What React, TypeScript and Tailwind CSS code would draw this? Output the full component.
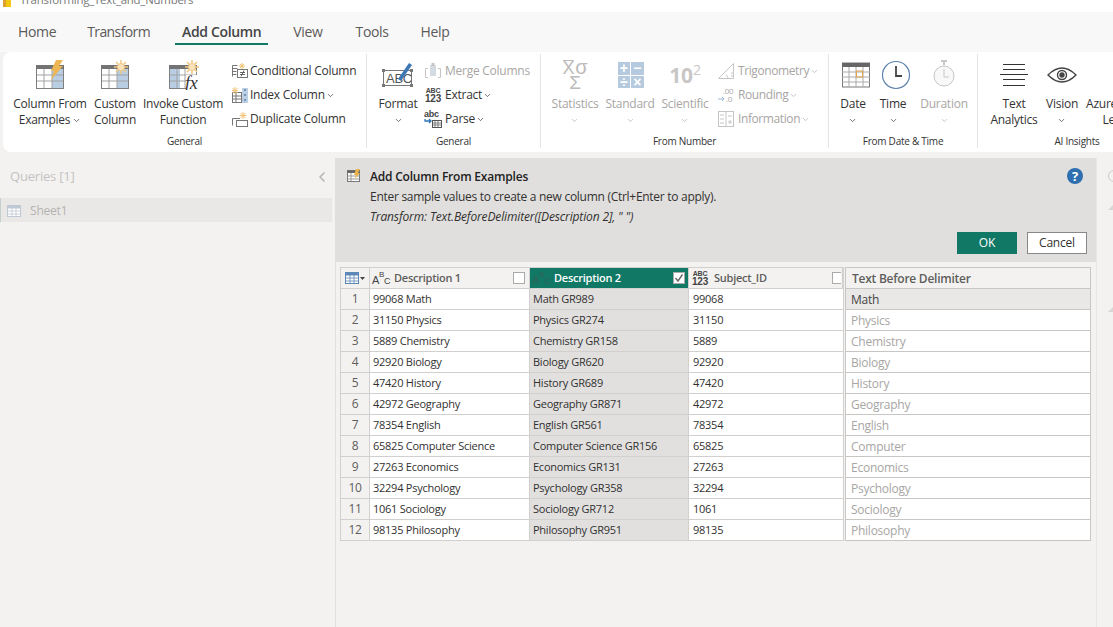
import React from 'react';
import { ChevronDown, ChevronLeft } from 'lucide-react';

const rows = [
  ['99068 Math', 'Math GR989', '99068', 'Math'],
  ['31150 Physics', 'Physics GR274', '31150', 'Physics'],
  ['5889 Chemistry', 'Chemistry GR158', '5889', 'Chemistry'],
  ['92920 Biology', 'Biology GR620', '92920', 'Biology'],
  ['47420 History', 'History GR689', '47420', 'History'],
  ['42972 Geography', 'Geography GR871', '42972', 'Geography'],
  ['78354 English', 'English GR561', '78354', 'English'],
  ['65825 Computer Science', 'Computer Science GR156', '65825', 'Computer'],
  ['27263 Economics', 'Economics GR131', '27263', 'Economics'],
  ['32294 Psychology', 'Psychology GR358', '32294', 'Psychology'],
  ['1061 Sociology', 'Sociology GR712', '1061', 'Sociology'],
  ['98135 Philosophy', 'Philosophy GR951', '98135', 'Philosophy'],
];

function Chevron({ muted }: { muted?: boolean }) {
  return <ChevronDown className={`w-[9px] h-[9px] shrink-0 ${muted ? 'text-[#b5b3b1]' : 'text-[#444]'}`} strokeWidth={2} />;
}

function Gear({ cx, cy }: { cx: number; cy: number }) {
  return (
    <g transform={`translate(${cx} ${cy})`} stroke="#f0c987" strokeWidth="1.6">
      <path d="M0-7V7M-7 0H7M-5-5L5 5M5-5L-5 5" />
      <circle r="3.5" fill="#f8e3bb" strokeWidth="1" />
    </g>
  );
}

function TableIcon({ variant }: { variant: 'flash' | 'gear' | 'fx' }) {
  const left = variant === 'fx';
  return (
    <svg width="32" height="30" viewBox="0 0 32 30">
      <rect x="2.5" y="5.5" width="27" height="23" fill="#fff" stroke="#808080" />
      <rect x="2" y="5" width="28" height="4" fill="#737373" />
      {left ? <rect x="3" y="9" width="10" height="19" fill="#b9cde3" /> : <rect x="18" y="9" width="11" height="19" fill="#b9cde3" />}
      <path d="M3 15h26M3 21h26M10 9v19M18 9v19" stroke="#a3a3a3" fill="none" />
      {variant === 'flash' && <path d="M22 0h7l-4 6h4L17 20l3-9h-3z" fill="#ecb654" />}
      {variant === 'gear' && <Gear cx={22} cy={7} />}
      {variant === 'fx' && (
        <>
          <Gear cx={25} cy={7} />
          <rect x="19" y="15" width="13" height="15" fill="#fff" />
          <text x="18" y="29" fontSize="18" fontStyle="italic" fontFamily="'Liberation Serif', serif" fill="#333">fx</text>
        </>
      )}
    </svg>
  );
}

function SmallIcon({ kind }: { kind: string }) {
  if (kind === 'abc123') {
    return (
      <span className="w-[18px] shrink-0 flex flex-col items-center font-['Liberation_Sans',sans-serif] font-bold text-[#444] leading-[8px]">
        <span className="text-[7px]">ABC</span>
        <span className="text-[10px]">123</span>
      </span>
    );
  }
  if (kind === 'abc') {
    return (
      <svg width="18" height="18" viewBox="0 0 18 18" className="shrink-0">
        <text x="0" y="7" fontSize="9" fontWeight="700" fontFamily="'Liberation Sans', sans-serif" fill="#444">abc</text>
        <path d="M1 9v2h6M5 9l2 2-2 2" stroke="#2e75b6" strokeWidth="1.3" fill="none" />
        <rect x="8.5" y="10.5" width="9" height="7" fill="#fff" stroke="#555" />
        <path d="M8 13h9M8 15h9M11 10v7M14 10v7" stroke="#555" strokeWidth=".7" />
      </svg>
    );
  }
  if (kind === 'merge' || kind === 'info' || kind === 'round' || kind === 'trig') {
    return (
      <svg width="18" height="18" viewBox="0 0 18 18" className="shrink-0" stroke="#c6c5c4" fill="none">
        {kind === 'merge' && (
          <>
            <path d="M4 6.500H1.500v9H4M14 6.500h2.500v9H14" />
            <rect x="6" y="3" width="6" height="11" fill="#d5dbe2" stroke="none" />
            <rect x="7.500" y="1" width="3" height="3" fill="#c6c5c4" stroke="none" />
          </>
        )}
        {kind === 'info' && (
          <>
            <rect x="1.500" y="1.500" width="15" height="15" />
            <path d="M9 1.500v15M11 6h4M11 12h4M13 10v4M3 5h4M3 9h4M3 13h4" />
          </>
        )}
        {kind === 'round' && (
          <>
            <text x="6" y="8" fontSize="8" fill="#a8a6a4" stroke="none">.00</text>
            <text x="9" y="16" fontSize="8" fill="#a8a6a4" stroke="none">.0</text>
            <path d="M1 13h6M5 11l2 2-2 2" stroke="#9db9d8" />
          </>
        )}
        {kind === 'trig' && <path d="M16.500 1.500v15H1.500zM11 16.500a6 6 0 0 0-2-4M14 14h2M14 11h2" />}
      </svg>
    );
  }
  return (
    <svg width="18" height="18" viewBox="0 0 18 18" className="shrink-0" fill="none" stroke="#777">
      {kind === 'cond' && (
        <>
          <path d="M1.500 3.500h5M1.500 6.500h5M1.500 9.500h4M1.500 12.500h4M1.500 3.500v11" />
          <rect x="6.500" y="7.500" width="10" height="8" fill="#fff" />
          <path d="M9 10.500h5M9 12.500h5M10 14.500l3-6" strokeWidth=".8" stroke="#444" />
          <path d="M11 1v6M8 4h6M9 2l4 4M13 2l-4 4" stroke="#eec477" />
        </>
      )}
      {kind === 'index' && (
        <>
          <rect x="1.500" y="6.500" width="9" height="10" fill="#fff" />
          <path d="M1.500 10h9M1.500 13h9M5 6.500v10" />
          <rect x="11" y="2" width="6" height="15" fill="#bcd0e5" stroke="none" />
          <path d="M14 3v2M14 8v2M14 13v2" stroke="#33587e" />
          <path d="M4 1v7M1 4.500h6M1.500 2l5 5M6.500 2l-5 5" stroke="#eec477" />
        </>
      )}
      {kind === 'dup' && (
        <>
          <path d="M1.500 15.500v-7h4M5 8.500h4" />
          <rect x="5.500" y="10.500" width="11" height="6" fill="#fff" />
          <path d="M12 2v7M8.500 5.500h7M9.500 3l5 5M14.500 3l-5 5" stroke="#eec477" />
        </>
      )}
    </svg>
  );
}

function BigButton({ icon, lines, chevronLine, muted, width }: { icon: React.ReactNode; lines: string[]; chevronLine?: boolean; muted?: boolean; width: string }) {
  return (
    <div className={`flex flex-col items-center shrink-0 ${width} ${muted ? 'text-[#a8a6a4]' : 'text-[#333]'}`}>
      <div className="h-[34px] flex items-center justify-center">{icon}</div>
      <div className="mt-[4px] text-center leading-[16px] whitespace-nowrap">
        {lines.map((line, i) => (
          <div key={line} className="flex items-center justify-center gap-[2px] h-[16px]">
            {line}
            {chevronLine && i === lines.length - 1 && <Chevron muted={muted} />}
          </div>
        ))}
        {lines.length === 1 && (
          <div className="flex justify-center items-center h-[16px]">
            <Chevron muted={muted} />
          </div>
        )}
      </div>
    </div>
  );
}

function SmallButton({ icon, label, chevron, muted, tight }: { icon: string; label: string; chevron?: boolean; muted?: boolean; tight?: boolean }) {
  return (
    <div className={`flex items-center h-[24px] whitespace-nowrap ${muted ? 'text-[#a8a6a4]' : 'text-[#333]'}`}>
      <span className={`flex shrink-0 ${tight ? 'mr-[1px]' : 'mr-[3px]'}`}>
        <SmallIcon kind={icon} />
      </span>
      {label}
      {chevron && (
        <span className="ml-[1px] flex">
          <Chevron muted={muted} />
        </span>
      )}
    </div>
  );
}

function Group({ label, width, children, last }: { label: string; width: string; children: React.ReactNode; last?: boolean }) {
  return (
    <div className={`${width} shrink-0 h-[94px] flex flex-col ${last ? '' : 'border-r border-[#e6e5e4]'}`}>
      <div className="h-[82px] shrink-0 flex items-start pt-[4px]">{children}</div>
      <div className="text-center text-[10px] leading-[12px] mt-[-1px] text-[#333]">{label}</div>
    </div>
  );
}

function Calendar() {
  return (
    <svg width="28" height="26" viewBox="0 0 28 26" className="ml-[6px]">
      <rect x=".5" y="1" width="27" height="24" fill="#fff" stroke="#777" />
      <rect x="0" y="1" width="28" height="4" fill="#666" />
      <path d="M0 10h28M0 15h28M0 20h28M7 5v20M14 5v20M21 5v20" stroke="#aaa" fill="none" />
      <rect x="14.500" y="9" width="6" height="6" fill="none" stroke="#e5a34c" />
    </svg>
  );
}

function Clock({ muted }: { muted?: boolean }) {
  if (muted) {
    return (
      <svg width="24" height="30" viewBox="0 0 24 30" fill="none" stroke="#c8c7c6">
        <path d="M9 1h6M12 1v4" strokeWidth="2" />
        <circle cx="12" cy="16" r="10" fill="#f8f8f8" />
        <path d="M12 9v8h5" />
      </svg>
    );
  }
  return (
    <svg width="30" height="30" viewBox="0 0 30 30" fill="none" className="ml-[6px]">
      <circle cx="15" cy="15" r="13.500" stroke="#5b82ac" strokeWidth="1.200" />
      <path d="M15 6v10h6" stroke="#444" strokeWidth="1.800" />
    </svg>
  );
}

function StandardIcon() {
  return (
    <div className="grid grid-cols-2 gap-[1px] w-[26px] h-[26px] text-white font-bold text-[14px] leading-[12px] text-center font-['Liberation_Sans',sans-serif] ml-[1px]">
      {['+', '−', '÷', '×'].map((s) => (
        <div key={s} className="bg-[#b5cade]">{s}</div>
      ))}
    </div>
  );
}

function StatisticsIcon() {
  return (
    <div className="flex flex-col items-center text-[#bcbbba] font-['Liberation_Sans',sans-serif] text-[18px] leading-[14px]">
      <div className="flex items-start gap-[1px]">
        <span className="border-t border-[#bcbbba]">X</span>
        <span className="text-[20px]">σ</span>
      </div>
      <span className="text-[19px] leading-[15px]">Σ</span>
    </div>
  );
}

function Ribbon() {
  return (
    <div className="ml-[3px] h-[100px] bg-white rounded-l-lg flex pt-[2px] overflow-hidden text-[12px] tracking-[-0.25px]">
      <Group label="General" width="w-[364px]">
        <BigButton width="w-[82px] ml-[6px]" icon={<TableIcon variant="flash" />} lines={['Column From', 'Examples']} chevronLine />
        <BigButton width="w-[46px] ml-[1px]" icon={<TableIcon variant="gear" />} lines={['Custom', 'Column']} />
        <BigButton width="w-[84px] ml-[3px]" icon={<TableIcon variant="fx" />} lines={['Invoke Custom', 'Function']} />
        <div className="ml-[6px] mt-[1px]">
          <SmallButton tight icon="cond" label="Conditional Column" />
          <SmallButton tight icon="index" label="Index Column" chevron />
          <SmallButton tight icon="dup" label="Duplicate Column" />
        </div>
      </Group>
      <Group label="General" width="w-[174px]">
        <BigButton
          width="w-[40px] ml-[11px]"
          icon={
            <svg width="34" height="30" viewBox="0 0 34 30" fill="none">
              <rect x="2.5" y="10.5" width="28" height="15" stroke="#777" />
              <path d="M1 9h3v3H1zM29 9h3v3h-3zM1 24h3v3H1zM29 24h3v3h-3z" fill="#777" />
              <text x="5" y="23" fontSize="13" fontFamily="'Liberation Sans', sans-serif" fill="#555">ABC</text>
              <path d="M17 19L28 3l3 2-11 16z" fill="#3f77b5" />
            </svg>
          }
          lines={['Format']}
        />
        <div className="ml-[6px] mt-[1px]">
          <SmallButton icon="merge" label="Merge Columns" muted />
          <SmallButton icon="abc123" label="Extract" chevron />
          <SmallButton icon="abc" label="Parse" chevron />
        </div>
      </Group>
      <Group label="From Number" width="w-[288px]">
        <BigButton muted width="w-[50px] ml-[9px]" icon={<StatisticsIcon />} lines={['Statistics']} />
        <BigButton muted width="w-[48px] ml-[6px]" icon={<StandardIcon />} lines={['Standard']} />
        <BigButton
          muted
          width="w-[50px] ml-[6px]"
          icon={
            <span className="text-[21px] leading-[24px] text-[#c8c7c6] font-bold">
              10<span className="text-[14px] font-normal align-top leading-[14px]">2</span>
            </span>
          }
          lines={['Scientific']}
        />
        <div className="ml-[7px] mt-[1px] tracking-[-0.4px]">
          <SmallButton icon="trig" label="Trigonometry" chevron muted />
          <SmallButton icon="round" label="Rounding" chevron muted />
          <SmallButton icon="info" label="Information" chevron muted />
        </div>
      </Group>
      <Group label="From Date & Time" width="w-[149px]">
        <BigButton width="w-[36px] ml-[6px]" icon={<Calendar />} lines={['Date']} />
        <BigButton width="w-[36px] ml-[4px]" icon={<Clock />} lines={['Time']} />
        <BigButton muted width="w-[50px] ml-[8px]" icon={<Clock muted />} lines={['Duration']} />
      </Group>
      <Group label="AI Insights" width="w-[198px]" last>
        <BigButton
          width="w-[48px] ml-[12px]"
          icon={
            <svg width="28" height="24" viewBox="0 0 28 24" stroke="#333" fill="none">
              <path d="M3 1.500h22M3 6.500h22M0 11.500h28M3 16.500h22M3 22.500h22" />
            </svg>
          }
          lines={['Text', 'Analytics']}
        />
        <BigButton
          width="w-[34px] ml-[7px]"
          icon={
            <svg width="30" height="16" viewBox="0 0 30 16" fill="none" stroke="#444" strokeWidth="1.4">
              <path d="M1 8Q15-6 29 8Q15 22 1 8z" />
              <circle cx="15" cy="8" r="4.5" />
              <circle cx="15" cy="8" r="2" fill="#444" />
            </svg>
          }
          lines={['Vision']}
        />
        <BigButton width="w-[80px] ml-[7px]" icon={<span />} lines={['Azure Machine', 'Learning']} />
      </Group>
    </div>
  );
}

function ColumnHead({ icon, label, selected, checked, width, boxClass, labelClass }: { icon: React.ReactNode; label: string; selected?: boolean; checked?: boolean; width: string; boxClass: string; labelClass?: string }) {
  return (
    <div className={`${width} shrink-0 flex items-center overflow-hidden ${selected ? 'bg-[#117865] text-white' : 'bg-[#f3f2f1] text-[#605e5c]'} font-semibold border-r border-[#d2d0ce]`}>
      <span className="w-[20px] ml-[2px] shrink-0">{icon}</span>
      <span className={`flex-1 whitespace-nowrap ${labelClass ?? 'ml-[2px]'}`}>{label}</span>
      <span className={`h-[12px] shrink-0 border border-[#aaa] bg-white flex items-center justify-center ${boxClass}`}>
        {checked && (
          <svg width="10" height="10" viewBox="0 0 10 10" fill="none" stroke="#666" strokeWidth="1.4">
            <path d="M1.500 5l2.500 3 4.500-6.500" />
          </svg>
        )}
      </span>
    </div>
  );
}

function AbcTypeIcon({ dark }: { dark?: boolean }) {
  return (
    <span className={`relative block w-[20px] h-[16px] font-normal font-['Liberation_Sans',sans-serif] ${dark ? 'text-[#2f6458]' : 'text-[#444]'}`}>
      <span className="absolute left-[0px] top-[4px] text-[11px] leading-[12px]">A</span>
      <span className="absolute left-[7px] top-[0px] text-[8px] leading-[10px]">B</span>
      <span className="absolute left-[12px] top-[6px] text-[9px] leading-[10px]">C</span>
    </span>
  );
}

function DataTable() {
  return (
    <div className="mt-[5px] ml-[4px] w-[751px] text-[11px] tracking-[-0.25px]">
      <div className="flex h-[22px]">
        <div className="flex border border-[#d2d0ce] w-[504px] shrink-0">
          <div className="w-[29px] shrink-0 flex items-center justify-center gap-[1px] bg-[#f3f2f1] border-r border-[#d2d0ce]">
            <svg width="14" height="12" viewBox="0 0 14 12" fill="none" stroke="#5d87b5">
              <rect x=".5" y=".5" width="13" height="11" fill="#fff" />
              <rect x=".5" y=".5" width="13" height="2.5" fill="#5d87b5" />
              <path d="M.5 6h13M.5 9h13M5 3v8M9 3v8" strokeWidth=".8" />
            </svg>
            <svg width="5" height="3" viewBox="0 0 5 3"><path d="M0 0h5L2.500 3z" fill="#444" /></svg>
          </div>
          <ColumnHead width="w-[160px]" icon={<AbcTypeIcon />} label="Description 1" boxClass="w-[12px] mr-[4px]" />
          <ColumnHead width="w-[159px]" icon={<AbcTypeIcon dark />} label="Description 2" selected checked boxClass="w-[12px] mr-[3px]" />
          <ColumnHead
            width="w-[154px]"
            icon={
              <span className="flex flex-col items-center w-[18px] text-[#444] font-['Liberation_Sans',sans-serif] font-bold leading-[8px]">
                <span className="text-[7px]">ABC</span>
                <span className="text-[10px]">123</span>
              </span>
            }
            label="Subject_ID"
            labelClass="ml-[3px]"
            boxClass="w-[9px] border-r-0 mr-[1px]"
          />
        </div>
        <div className="ml-[1px] w-[246px] shrink-0 border border-[#c8c6c4] bg-[#f3f2f1] text-[#605e5c] font-semibold text-[12px] flex items-center pl-[6px] pt-[2px] whitespace-nowrap">
          Text Before Delimiter
        </div>
      </div>
      {rows.map((row, i) => (
        <div key={row[0]} className="flex h-[21px] w-[751px] text-[#323130]">
          <div className="flex w-[504px] shrink-0 border-l border-b border-r border-[#d2d0ce]">
            <div className="w-[29px] shrink-0 bg-[#f3f2f1] border-r border-[#d2d0ce] flex items-center justify-center text-[12px] text-[#605e5c]">{i + 1}</div>
            <div className="w-[160px] shrink-0 bg-white border-r border-[#d2d0ce] flex items-center pl-[3px] whitespace-nowrap">{row[0]}</div>
            <div className="w-[159px] shrink-0 bg-[#e1e0df] border-r border-[#d2d0ce] flex items-center pl-[3px] whitespace-nowrap">{row[1]}</div>
            <div className="w-[154px] shrink-0 bg-white flex items-center pl-[4px]">{row[2]}</div>
          </div>
          <div className={`ml-[1px] w-[246px] shrink-0 border-l border-r border-b border-[#c8c6c4] flex items-center pl-[5px] pt-[2px] text-[12px] ${i === 0 ? 'bg-[#e9e8e7] text-[#444]' : 'bg-white text-[#a8a6a4]'}`}>
            {row[3]}
          </div>
        </div>
      ))}
    </div>
  );
}

function Banner() {
  return (
    <div className="h-[104px] bg-[#e0dfdd] flex pl-[11px] pr-[9px] text-[12px] text-[#323130]">
      <div className="pt-[11px] w-[23px] shrink-0">
        <svg width="14" height="14" viewBox="0 0 14 14">
          <rect x=".5" y="1.5" width="12" height="11" fill="#fff" stroke="#777" />
          <rect x=".5" y="1.5" width="12" height="2.5" fill="#666" />
          <path d="M4 4v8M.5 7h12M.5 10h12" stroke="#999" />
          <path d="M9 0h4l-2 4h2l-5 6 1-4H7z" fill="#e9b44c" />
        </svg>
      </div>
      <div className="flex-1">
        <div className="pt-[10px] font-semibold leading-[18px] text-[#222] tracking-[-0.2px]">Add Column From Examples</div>
        <div className="mt-[2px] leading-[18px] tracking-[-0.28px]">Enter sample values to create a new column (Ctrl+Enter to apply).</div>
        <div className="mt-[2px] leading-[18px] italic tracking-[-0.14px]">Transform: Text.BeforeDelimiter([Description 2], " ")</div>
      </div>
      <div className="flex flex-col items-end justify-between pt-[10px] pb-[8px]">
        <div className="mr-[4px] w-[16px] h-[16px] rounded-full bg-[#2e6fb0] text-white text-[13px] font-bold leading-[16px] text-center">?</div>
        <div className="flex gap-[10px] tracking-[-0.2px]">
          <div className="w-[60px] h-[22px] bg-[#117865] text-white flex items-center justify-center">OK</div>
          <div className="w-[60px] h-[22px] bg-white border border-[#8a8886] flex items-center justify-center">Cancel</div>
        </div>
      </div>
    </div>
  );
}

export default function App() {
  return (
    <div className="w-[1113px] h-[627px] overflow-hidden bg-[#f3f2f1] font-['Open_Sans','Noto_Sans',sans-serif] tracking-[-0.2px]">
      <div className="h-[12px] bg-white overflow-hidden flex items-start">
        <div className="w-[8px] h-[7px] flex ml-[3px] shrink-0">
          <div className="w-[3px] bg-[#e0a030]" />
          <div className="w-[5px] bg-[#f2c811]" />
        </div>
        <div className="ml-[9px] text-[11.4px] leading-[12px] mt-[-6px] text-[#777] whitespace-nowrap">Transforming_Text_and_Numbers</div>
      </div>
      <div className="h-[40px] bg-[#f8f8f8] flex items-center pl-[18px] pb-[2px] text-[14px] text-[#5c5a58] tracking-[-0.35px]">
        <span>Home</span>
        <span className="ml-[31px] tracking-[-0.6px]">Transform</span>
        <span className="ml-[25px] relative font-semibold text-[#444] px-[7px]">
          Add Column
          <span className="absolute left-0 right-0 bottom-[-3px] h-[2px] bg-[#117865]" />
        </span>
        <span className="ml-[25px]">View</span>
        <span className="ml-[33px]">Tools</span>
        <span className="ml-[32px]">Help</span>
      </div>
      <Ribbon />
      <div className="flex mt-[6px] h-[469px]">
        <div className="w-[336px] shrink-0 border-r border-[#e1dfdd] h-full">
          <div className="h-[38px] pl-[10px] pr-[5px] flex items-center justify-between text-[13px] text-[#c4c3c1]">
            Queries [1]
            <ChevronLeft className="w-[16px] h-[16px] text-[#b8b7b6]" strokeWidth={2.5} />
          </div>
          <div className="mt-[2px] h-[24px] pt-[1px] w-[332px] bg-[#e9e8e6] border-l border-[#c3d0cc] flex items-center pl-[6px] text-[12px] text-[#b5b3b1]">
            <svg width="14" height="12" viewBox="0 0 14 12" fill="none" stroke="#bfc9d6">
              <rect x=".5" y=".5" width="13" height="11" fill="#fff" />
              <rect x=".5" y=".5" width="13" height="2.5" fill="#bfc9d6" />
              <path d="M.5 6h13M.5 9h13M5 3v8M9 3v8" strokeWidth=".8" />
            </svg>
            <span className="ml-[9px]">Sheet1</span>
          </div>
        </div>
        <div className="w-[760px] shrink-0">
          <Banner />
          <DataTable />
        </div>
        <div className="flex-1 border-l border-[#e8e7e6] relative">
          <span className="absolute left-[11px] top-[12px] w-[12px] h-[12px] rounded-full border border-[#ccc]" />
          <span className="absolute left-[11px] top-[46px] w-0 h-0 border-l-[6px] border-l-transparent border-b-[6px] border-b-[#d8d7d6]" />
          <span className="absolute left-[11px] top-[148px] w-0 h-0 border-l-[6px] border-l-transparent border-b-[6px] border-b-[#d8d7d6]" />
        </div>
      </div>
    </div>
  );
}
